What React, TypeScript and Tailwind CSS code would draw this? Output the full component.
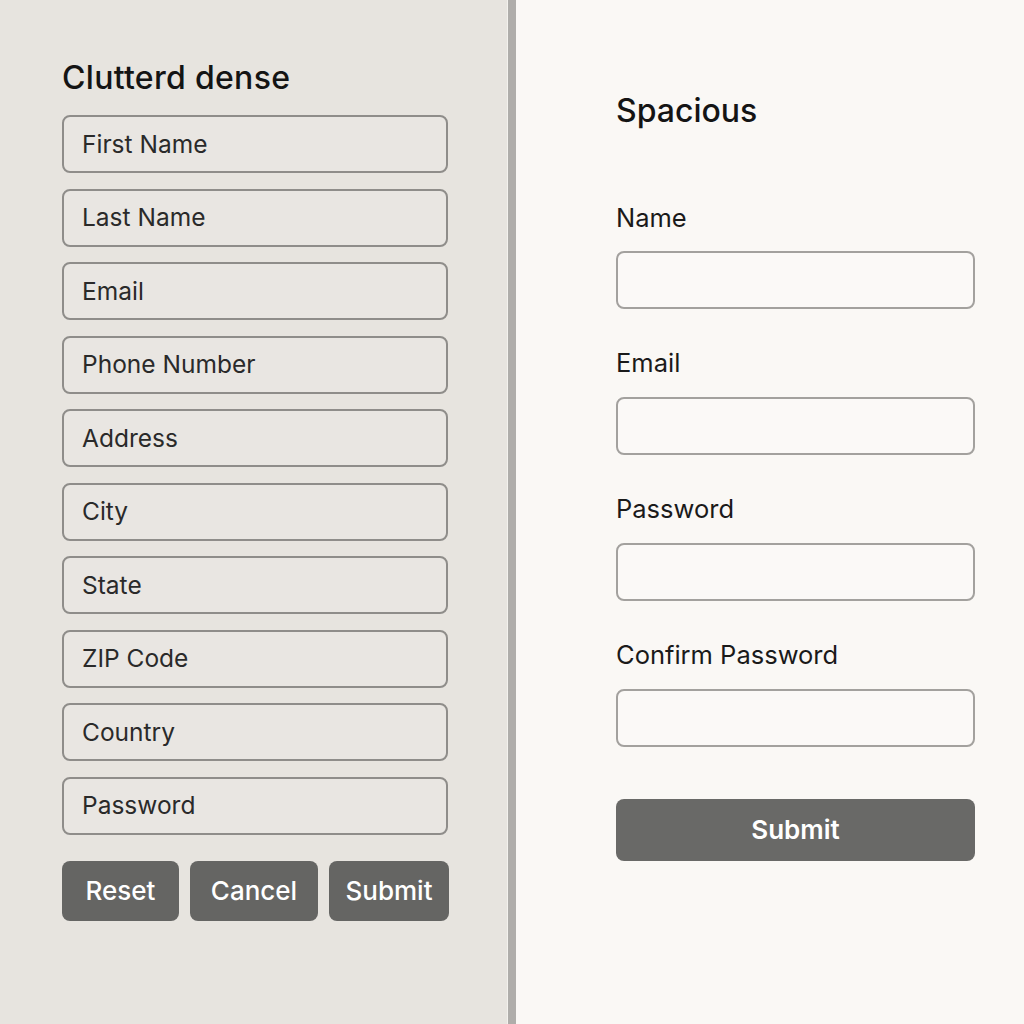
const denseFields = [
  "First Name",
  "Last Name",
  "Email",
  "Phone Number",
  "Address",
  "City",
  "State",
  "ZIP Code",
  "Country",
  "Password",
];

const spaciousFields = ["Name", "Email", "Password", "Confirm Password"];

const font = { fontFamily: "Inter, 'Noto Sans', sans-serif" };

export default function App() {
  return (
    <div className="flex h-[1024px] w-[1024px] overflow-hidden" style={font}>
      {/* Dense side */}
      <div className="flex w-[507px] flex-col bg-[#e7e4df] pl-[62px] pt-[61.5px]">
        <h1 className="text-[32px] font-medium leading-none tracking-[0.3px] text-[#141414]">
          Clutterd dense
        </h1>
        <div className="mt-[21.5px] flex w-[386px] flex-col gap-[15.5px]">
          {denseFields.map((f) => (
            <div
              key={f}
              className="flex h-[58px] items-center rounded-[8px] border-2 border-[#8f8d8a] bg-[#e9e6e2] pl-[18px] text-[24.5px] text-[#2a2a2a]"
            >
              {f}
            </div>
          ))}
        </div>
        <div className="mt-[26px] flex gap-[11px]">
          <button className="h-[60px] w-[117px] rounded-[8px] bg-[#656563] text-[26px] font-medium text-white">
            Reset
          </button>
          <button className="h-[60px] w-[128px] rounded-[8px] bg-[#656563] text-[26px] font-medium text-white">
            Cancel
          </button>
          <button className="h-[60px] w-[120px] rounded-[8px] bg-[#656563] text-[26px] font-medium text-white">
            Submit
          </button>
        </div>
      </div>

      {/* Divider */}
      <div className="w-px bg-[#f3f1ed]" />
      <div className="w-[8px] bg-[#afadaa]" />

      {/* Spacious side */}
      <div className="flex flex-1 flex-col bg-[#faf8f5] pl-[100px] pt-[95px]">
        <h1 className="text-[32px] font-medium leading-none text-[#141414]">
          Spacious
        </h1>
        <div className="mt-[77.5px] flex w-[359px] flex-col gap-[41.9px]">
          {spaciousFields.map((f) => (
            <div key={f} className="flex flex-col">
              <label className="text-[25.5px] leading-none text-[#1a1a1a]">
                {f}
              </label>
              <div className="mt-[20.6px] h-[58px] rounded-[8px] border-2 border-[#a3a19e] bg-[#fbf9f7]" />
            </div>
          ))}
        </div>
        <button className="mt-[52px] h-[62px] w-[359px] rounded-[8px] bg-[#696967] text-[26px] font-semibold text-white">
          Submit
        </button>
      </div>
    </div>
  );
}
